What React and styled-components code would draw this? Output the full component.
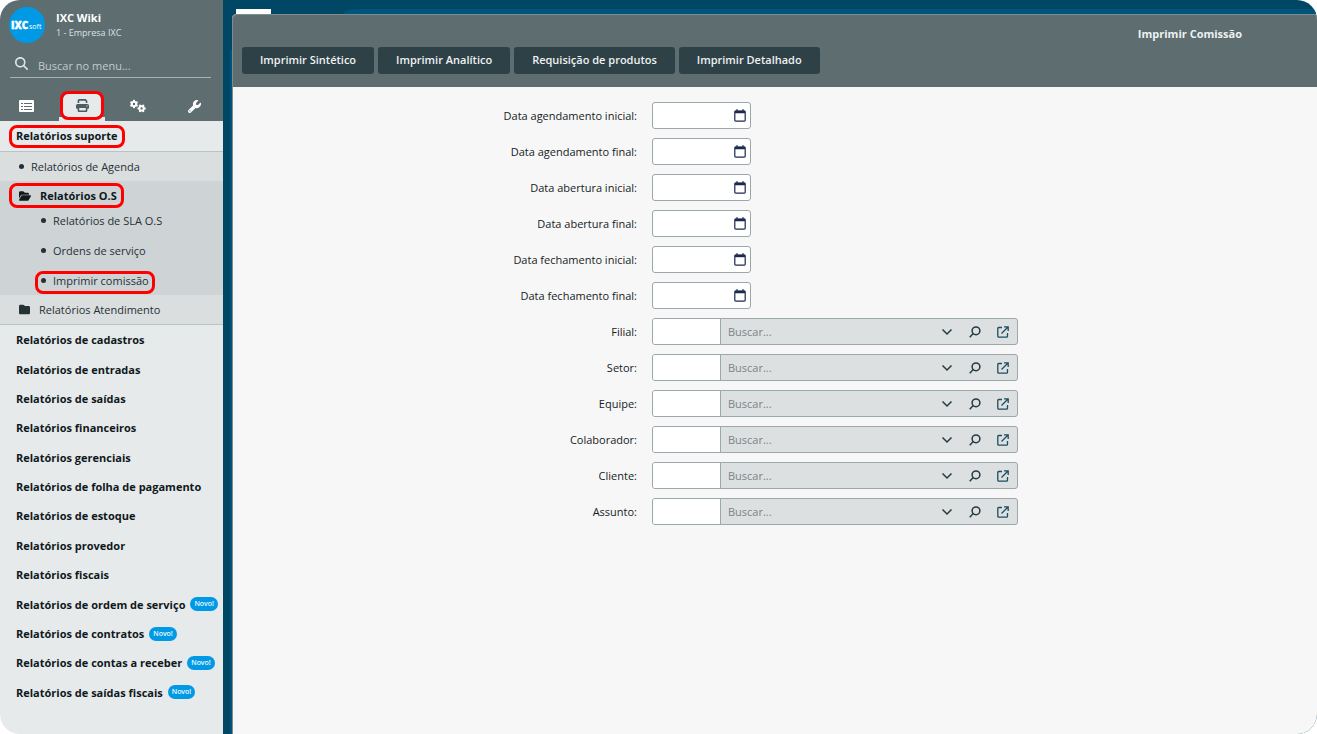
import React from 'react'
import styled, { createGlobalStyle, css } from 'styled-components'
import { FaMagnifyingGlass, FaPrint, FaGears, FaWrench, FaFolder, FaFolderOpen } from 'react-icons/fa6'

const GlobalStyle = createGlobalStyle`
  * {
    box-sizing: border-box;
  }
  body {
    margin: 0;
    background: #fff;
    color: #151c1f;
    font-family: "Open Sans", "Noto Sans", sans-serif;
    font-size: 11px;
  }
  button, input {
    font: inherit;
    color: inherit;
  }
  a {
    color: inherit;
    text-decoration: none;
  }
`

const Page = styled.div`
  display: flex;
  min-height: 100vh;
  border-radius: 20px;
  overflow: hidden;
`

const Sidebar = styled.aside`
  width: 223px;
  flex-shrink: 0;
  background: #e6eaeb;
`

const SidebarTop = styled.header`
  height: 121px;
  background: #5d6d70;
  color: #fff;
  display: flex;
  flex-direction: column;
`

const Company = styled.div`
  display: flex;
  align-items: center;
  gap: 11px;
  padding: 7px 9px 0;
  strong {
    display: block;
    line-height: 15px;
  }
  span {
    display: block;
    font-size: 9px;
    line-height: 15px;
    color: #dde2e3;
  }
`

const MenuSearch = styled.label`
  display: flex;
  align-items: center;
  gap: 10px;
  height: 27px;
  margin: 8px 12px 0 10px;
  padding: 0 5px;
  border-bottom: 1px solid #a9b3b5;
  color: #dfe4e5;
  svg {
    flex-shrink: 0;
    margin-bottom: 2px;
  }
  input {
    width: 100%;
    border: 0;
    padding: 3px 0 0;
    background: none;
    outline: none;
  }
  input::placeholder {
    color: #c3cbcd;
    opacity: 1;
  }
`

const Tabs = styled.nav`
  display: flex;
  justify-content: space-between;
  margin-top: auto;
  padding: 0 6px 0 3px;
`

const outlined = css`
  outline: 3px solid #f00;
  border-radius: 5px;
`

const Tab = styled.button`
  width: 46px;
  height: 30px;
  border: 0;
  padding: 0;
  display: grid;
  place-items: center;
  background: none;
  color: #fff;
  cursor: pointer;
`

const ActiveTab = styled(Tab)`
  padding-bottom: 1px;
  background: linear-gradient(#e6eaeb, #e6eaeb) bottom / 100% 4px no-repeat;
  color: #4d5c60;
  span {
    display: grid;
    place-items: center;
    width: 38px;
    height: 23px;
    background: #e6eaeb;
    ${outlined}
  }
`

const Section = styled.a`
  display: flex;
  align-items: center;
  gap: 5px;
  height: ${p => (p.$first ? '30px' : 'auto')};
  padding-left: 16px;
  color: #10181b;
  font-weight: bold;
  white-space: nowrap;
`

const Sections = styled.div`
  display: grid;
  grid-auto-rows: 1fr;
  height: 382px;
`

const Mark = styled.span`
  padding: 0 4px 2px;
  margin: 0 -4px;
  ${outlined}
`

const Tree = styled.div`
  background: #dadedf;
  border-top: 1px solid #b9c2c5;
  border-bottom: 1px solid #b9c2c5;
  color: #263135;
`

const TreeItem = styled.a`
  display: flex;
  align-items: center;
  height: 29px;
  padding-left: 19px;
`

const TreeLabel = styled.span`
  display: flex;
  align-items: center;
  height: ${p => (p.$folder ? '19px' : '17px')};
  gap: ${p => (p.$folder ? '9px' : '7px')};
  padding: 0 4px;
  margin: 0 -4px;
  ${p => p.$on && outlined}
`

const OpenLabel = styled(TreeLabel)`
  padding-left: 7px;
  margin-left: -7px;
  color: #10181b;
  font-weight: bold;
`

const OpenBranch = styled.div`
  background: #ced3d5;
`

const Leaves = styled.div`
  display: grid;
  gap: 6px;
  padding-bottom: 1px;
  ${TreeItem} {
    height: 24px;
    padding-left: 41px;
  }
  ${TreeLabel} {
    padding: 0 3px 3px;
    margin: 0 -3px;
  }
`

const Dot = styled.i`
  width: 5px;
  height: 5px;
  border-radius: 50%;
  background: #263135;
`

const Badge = styled.span`
  padding: 0 4px;
  border-radius: 7px;
  background: #0099e5;
  color: #fff;
  font-family: "Noto Sans", sans-serif;
  font-size: 7px;
  font-weight: 500;
  line-height: 14px;
`

const Desktop = styled.div`
  flex: 1;
  min-width: 0;
  display: flex;
  flex-direction: column;
  padding-left: 9px;
  background: linear-gradient(#00547a, #00547a) 7px 50px / 2px 100% no-repeat #004766;
`

const DesktopBar = styled.div`
  height: 14px;
  padding: 9px 0 0 4px;
  display: flex;
  gap: 72px;
  &::before {
    content: '';
    width: 35px;
    background: #fff;
  }
  &::after {
    content: '';
    flex: 1;
    border-top-left-radius: 14px 5px;
    background: #00547a;
  }
`

const Window = styled.main`
  flex: 1;
  border: 1px solid #7d8c8f;
  border-width: 1px 0 0 1px;
  border-top-left-radius: 4px;
  overflow: hidden;
  background: #f7f7f7;
`

const WindowHeader = styled.header`
  background: #5d6d70;
  color: #fff;
  padding: 11px 9px 13px;
  h1 {
    margin: 0;
    padding-right: 66px;
    text-align: right;
    font-size: 11px;
    line-height: 16px;
    color: #eef1f1;
  }
`

const Actions = styled.div`
  display: flex;
  gap: 4px;
  padding-top: 5px;
`

const Action = styled.button`
  height: 27px;
  padding: 0 18px 2px;
  border: 0;
  border-radius: 3px;
  background: #2e4147;
  color: #eef1f1;
  font-weight: 600;
  cursor: pointer;
`

const Form = styled.form`
  display: grid;
  gap: 9px;
  padding: 15px 0;
`

const Row = styled.div`
  display: grid;
  grid-template-columns: 404px 366px;
  gap: 15px;
  align-items: center;
  label {
    text-align: right;
  }
`

const field = css`
  height: 27px;
  border: 1px solid #9aa8ab;
  border-radius: 3px;
  overflow: hidden;
  display: flex;
  align-items: center;
`

const DateField = styled.div`
  ${field}
  width: 99px;
  background: #fff;
  padding-right: 3px;
  input {
    flex: 1;
    min-width: 0;
    border: 0;
    background: none;
    outline: none;
  }
`

const Lookup = styled.div`
  ${field}
  background: #dce0e1;
`

const CodeInput = styled.input`
  width: 68px;
  height: 100%;
  border: 0;
  border-right: 1px solid #9aa8ab;
  outline: none;
  background: #fff;
`

const LookupInput = styled.input`
  flex: 1;
  min-width: 0;
  border: 0;
  padding: 0 7px;
  background: none;
  outline: none;
  &::placeholder {
    color: #7d8385;
    opacity: 1;
  }
`

const IconButton = styled.button`
  border: 0;
  padding: 0;
  width: ${p => (p.$wide ? '28px' : '14px')};
  height: 20px;
  display: grid;
  place-items: center;
  background: none;
  color: ${p => p.$color || '#263a42'};
  cursor: pointer;
`

const sections = [
  ['Relatórios de cadastros'],
  ['Relatórios de entradas'],
  ['Relatórios de saídas'],
  ['Relatórios financeiros'],
  ['Relatórios gerenciais'],
  ['Relatórios de folha de pagamento'],
  ['Relatórios de estoque'],
  ['Relatórios provedor'],
  ['Relatórios fiscais'],
  ['Relatórios de ordem de serviço', true],
  ['Relatórios de contratos', true],
  ['Relatórios de contas a receber', true],
  ['Relatórios de saídas fiscais', true],
]

const actions = ['Imprimir Sintético', 'Imprimir Analítico', 'Requisição de produtos', 'Imprimir Detalhado']

const dates = [
  'Data agendamento inicial',
  'Data agendamento final',
  'Data abertura inicial',
  'Data abertura final',
  'Data fechamento inicial',
  'Data fechamento final',
]

const lookups = ['Filial', 'Setor', 'Equipe', 'Colaborador', 'Cliente', 'Assunto']

const Logo = () => (
  <svg width="36" height="36" viewBox="0 0 36 36" role="img" aria-label="IXC Soft">
    <circle cx="18" cy="18" r="18" fill="#0099e5" />
    <text x="2" y="22" fill="#fff" stroke="#fff" strokeWidth=".4" fontFamily="Open Sans, sans-serif" fontWeight="800" fontSize="10">IXC</text>
    <text x="20" y="22" fill="#fff" fontFamily="Open Sans, sans-serif" fontSize="7">soft</text>
  </svg>
)

const ListIcon = () => (
  <svg width="15" height="12" viewBox="0 0 15 12">
    <rect width="15" height="12" rx="1" fill="#fff" />
    <path d="M2 3.5h2M2 6.5h2M2 9.5h2M5 3.5h8M5 6.5h8M5 9.5h8" stroke="#5d6d70" />
  </svg>
)

const CalendarIcon = () => (
  <svg width="12" height="13" viewBox="0 0 12 13">
    <path d="M3 0v3M9 0v3" stroke="#5b6680" strokeWidth="1.5" />
    <rect x=".8" y="2.2" width="10.4" height="9.9" rx=".8" fill="none" stroke="#1b2850" strokeWidth="1.2" />
    <path d="M1 3h10" stroke="#1b2850" strokeWidth="2.4" />
  </svg>
)

const ChevronIcon = () => (
  <svg width="12" height="8" viewBox="0 0 12 8">
    <path d="M1.5 1.5 6 6l4.5-4.5" fill="none" stroke="currentColor" strokeWidth="1.5" />
  </svg>
)

const LensIcon = () => (
  <svg width="12" height="12" viewBox="0 0 12 12" fill="none" stroke="currentColor" strokeWidth="1.5">
    <circle cx="7" cy="4.8" r="3.9" />
    <path d="M4.2 7.6.7 11.2" />
  </svg>
)

const OpenIcon = () => (
  <svg width="12" height="12" viewBox="0 0 12 12" fill="none" stroke="currentColor" strokeWidth="1.3">
    <path d="M5 1.5H1.8a1 1 0 0 0-1 1v7.7a1 1 0 0 0 1 1h7.7a1 1 0 0 0 1-1V7M4.5 7.5l6-6M7 .8h4.2V5" />
  </svg>
)

export default function App() {
  return (
    <>
      <GlobalStyle />
      <Page>
        <Sidebar>
          <SidebarTop>
            <Company>
              <Logo />
              <div>
                <strong>IXC Wiki</strong>
                <span>1 - Empresa IXC</span>
              </div>
            </Company>
            <MenuSearch>
              <FaMagnifyingGlass size={13} />
              <input type="text" placeholder="Buscar no menu..." aria-label="Buscar no menu" />
            </MenuSearch>
            <Tabs>
              <Tab aria-label="Menu"><ListIcon /></Tab>
              <ActiveTab aria-label="Relatórios"><span><FaPrint size={13} /></span></ActiveTab>
              <Tab aria-label="Configurações"><FaGears size={16} /></Tab>
              <Tab aria-label="Ferramentas"><FaWrench size={13} /></Tab>
            </Tabs>
          </SidebarTop>

          <Section href="#" $first><Mark>Relatórios suporte</Mark></Section>
          <Tree>
            <TreeItem href="#"><TreeLabel><Dot />Relatórios de Agenda</TreeLabel></TreeItem>
            <OpenBranch>
              <TreeItem href="#"><OpenLabel $folder $on><FaFolderOpen size={12} />Relatórios O.S</OpenLabel></TreeItem>
              <Leaves>
                <TreeItem href="#"><TreeLabel><Dot />Relatórios de SLA O.S</TreeLabel></TreeItem>
                <TreeItem href="#"><TreeLabel><Dot />Ordens de serviço</TreeLabel></TreeItem>
                <TreeItem href="#"><TreeLabel $on><Dot />Imprimir comissão</TreeLabel></TreeItem>
              </Leaves>
            </OpenBranch>
            <TreeItem href="#"><TreeLabel $folder><FaFolder size={11} />Relatórios Atendimento</TreeLabel></TreeItem>
          </Tree>
          <Sections>
            {sections.map(([name, isNew]) => (
              <Section href="#" key={name}>
                {name}
                {isNew && <Badge>Novo!</Badge>}
              </Section>
            ))}
          </Sections>
        </Sidebar>

        <Desktop>
          <DesktopBar />
          <Window>
            <WindowHeader>
              <h1>Imprimir Comissão</h1>
              <Actions>
                {actions.map(name => <Action type="button" key={name}>{name}</Action>)}
              </Actions>
            </WindowHeader>
            <Form>
              {dates.map(name => (
                <Row key={name}>
                  <label htmlFor={name}>{name}:</label>
                  <DateField>
                    <input id={name} type="text" />
                    <IconButton type="button" aria-label="Abrir calendário"><CalendarIcon /></IconButton>
                  </DateField>
                </Row>
              ))}
              {lookups.map(name => (
                <Row key={name}>
                  <label htmlFor={name}>{name}:</label>
                  <Lookup>
                    <CodeInput id={name} type="text" />
                    <LookupInput type="text" placeholder="Buscar..." aria-label={'Buscar ' + name} />
                    <IconButton type="button" $wide aria-label="Listar"><ChevronIcon /></IconButton>
                    <IconButton type="button" $wide aria-label="Pesquisar"><LensIcon /></IconButton>
                    <IconButton type="button" $wide $color="#1d4c5f" aria-label="Abrir"><OpenIcon /></IconButton>
                  </Lookup>
                </Row>
              ))}
            </Form>
          </Window>
        </Desktop>
      </Page>
    </>
  )
}
